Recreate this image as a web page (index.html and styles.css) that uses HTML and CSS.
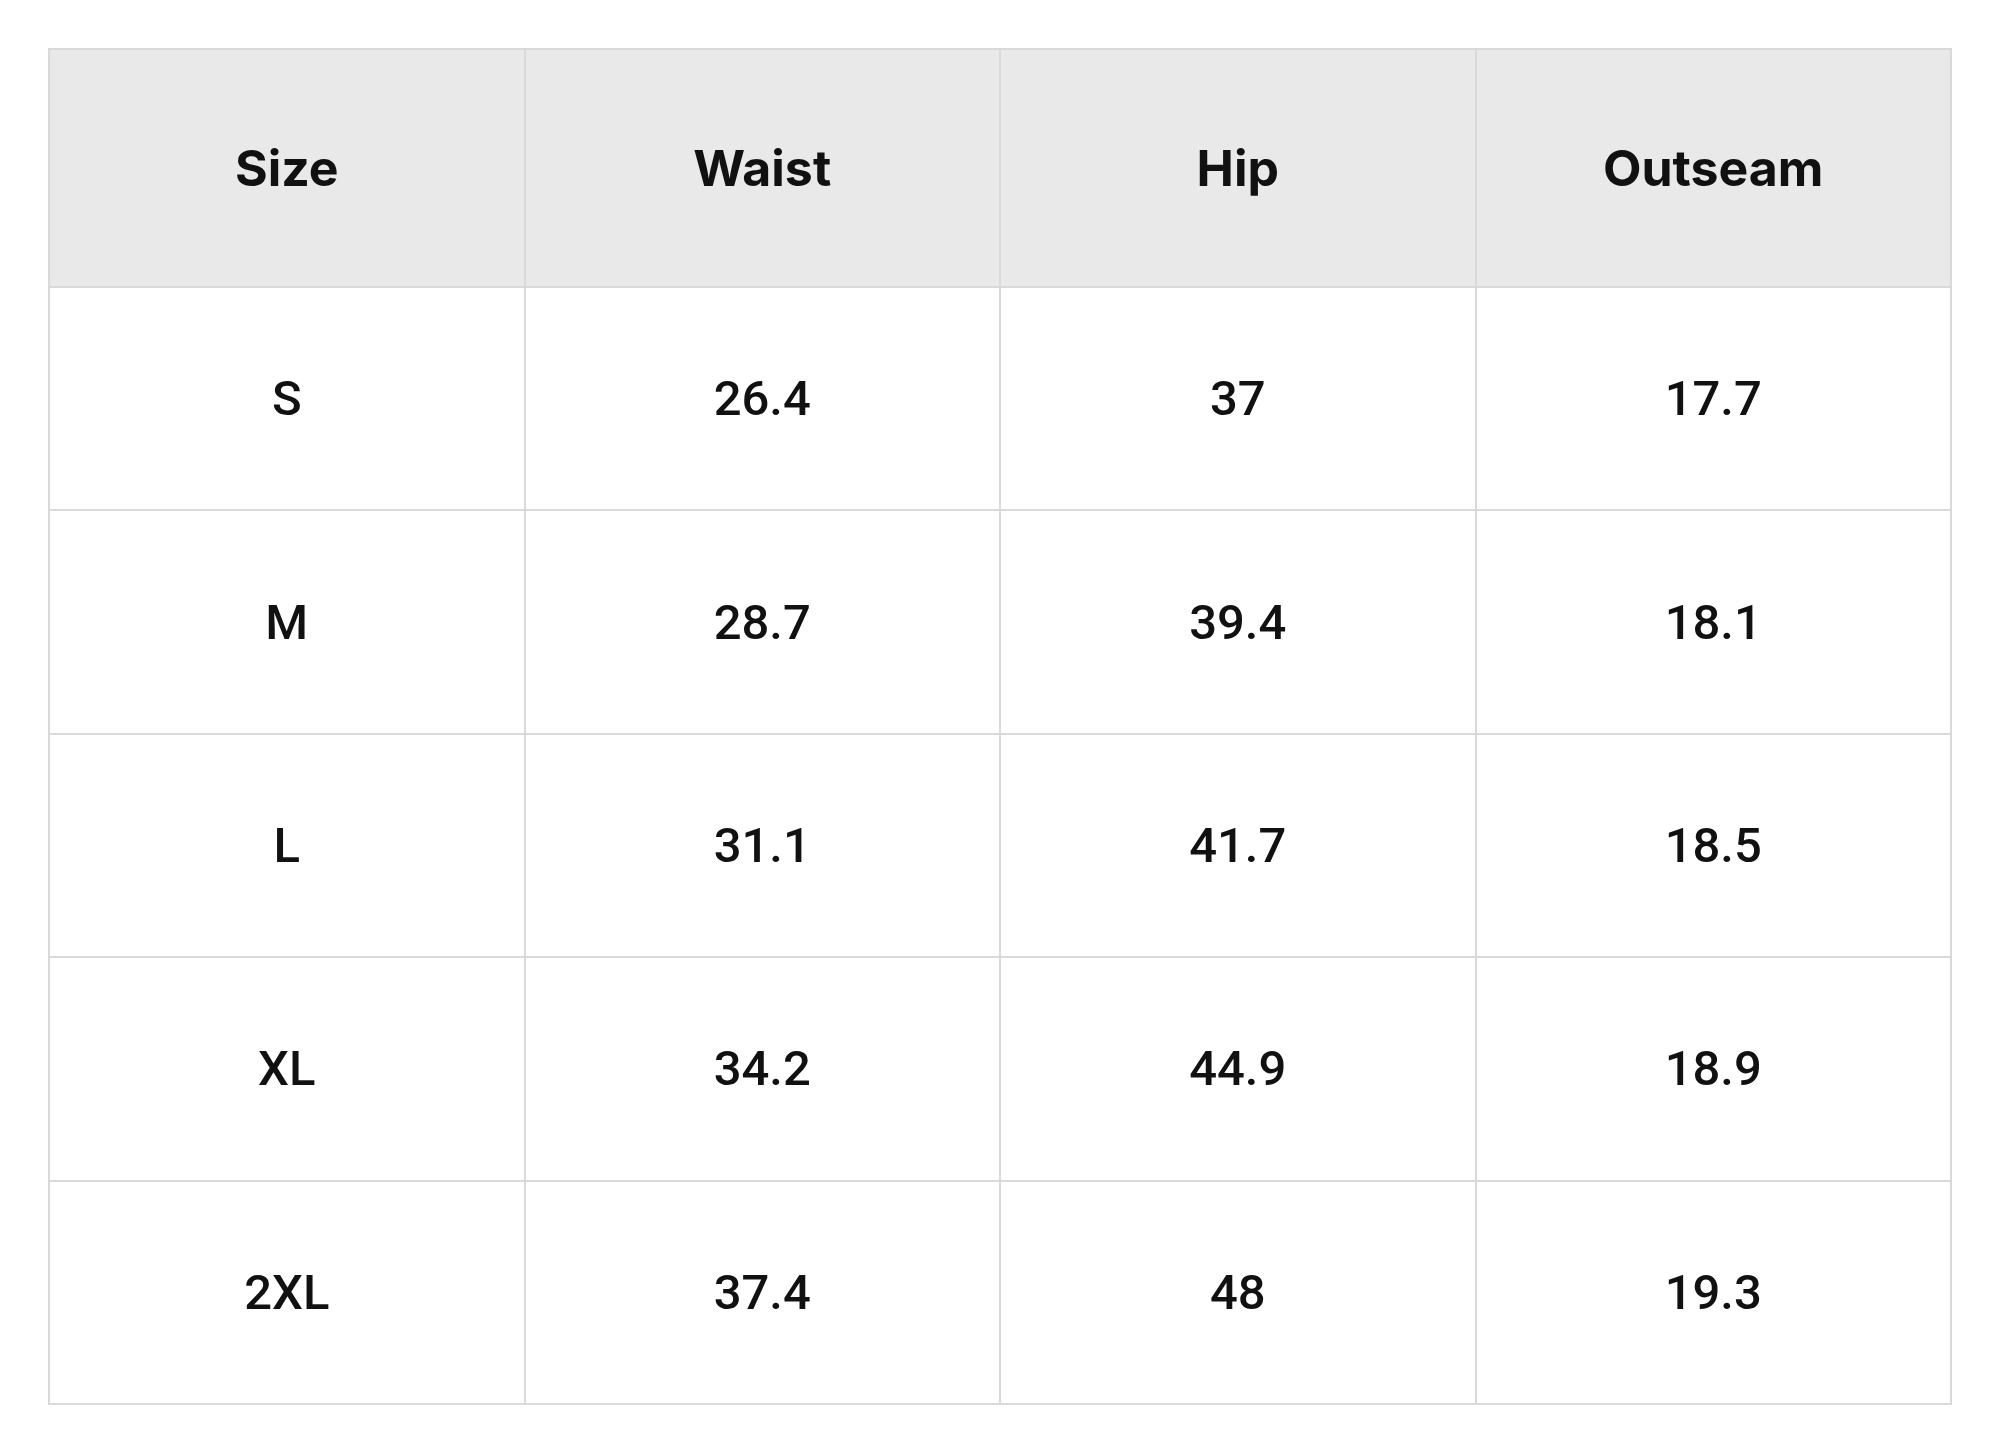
FILE: index.html
```html
<!DOCTYPE html>
<html lang="en">
<head>
<meta charset="utf-8">
<title>Size chart</title>
<link rel="stylesheet" href="styles.css">
</head>
<body>
<table class="size-table">
  <thead>
    <tr class="head-row">
      <th>Size</th>
      <th>Waist</th>
      <th>Hip</th>
      <th>Outseam</th>
    </tr>
  </thead>
  <tbody>
    <tr class="body-row"><td>S</td><td>26.4</td><td>37</td><td>17.7</td></tr>
    <tr class="body-row"><td>M</td><td>28.7</td><td>39.4</td><td>18.1</td></tr>
    <tr class="body-row"><td>L</td><td>31.1</td><td>41.7</td><td>18.5</td></tr>
    <tr class="body-row"><td>XL</td><td>34.2</td><td>44.9</td><td>18.9</td></tr>
    <tr class="body-row"><td>2XL</td><td>37.4</td><td>48</td><td>19.3</td></tr>
  </tbody>
</table>
</body>
</html>
```
FILE: styles.css
```css
html, body {
  margin: 0;
  padding: 0;
  background: #ffffff;
}
body {
  padding: 48px;
}
.size-table {
  width: 1904px;
  border-collapse: collapse;
  table-layout: fixed;
  color: #111111;
}
.size-table th,
.size-table td {
  border: 2px solid #d9d9d9;
  text-align: center;
  vertical-align: middle;
  padding: 0;
}
.head-row {
  height: 238px;
  background: #e9e9e9;
}
.head-row th {
  font-family: Inter, "Liberation Sans", sans-serif;
  font-weight: 700;
  font-size: 50px;
}
.body-row {
  height: 223.4px;
}
.body-row td {
  font-family: Roboto, "Liberation Sans", sans-serif;
  font-weight: 500;
  font-size: 49px;
}
```
